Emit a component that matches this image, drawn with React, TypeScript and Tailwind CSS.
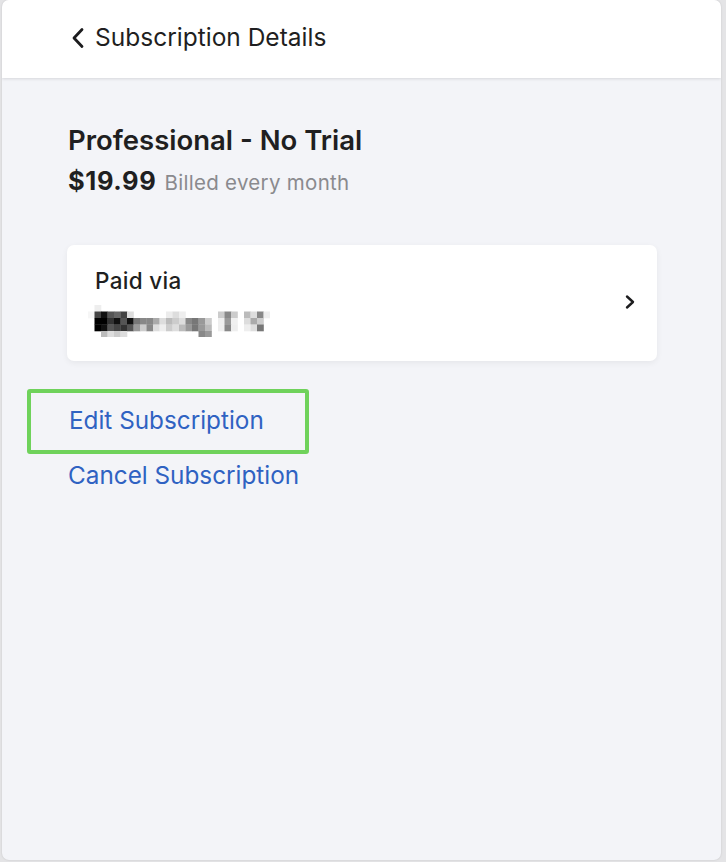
import React from "react";

const F = { fontFamily: "Inter, 'Noto Sans', sans-serif" };

const rows: string[][] = [
  ["", "#eeeeee", "", "", "", "", "", "", "", "", "", "", "", "", "", "", "", "", "", "", "", "", "", "", "", "", "", ""],
  ["#f6f6f6", "#444444", "#111111", "#555555", "#666666", "#444444", "#dddddd", "", "", "", "", "", "#ececec", "#dddddd", "#eeeeee", "", "", "", "", "", "#cccccc", "#888888", "#cccccc", "", "#bbbbbb", "#dddddd", "#888888", "#eeeeee"],
  ["", "#000000", "#000000", "#333333", "#111111", "#555555", "#111111", "#777777", "#888888", "#888888", "#aaaaaa", "#dddddd", "#bbbbbb", "#cccccc", "#dddddd", "#888888", "#777777", "#999999", "#cccccc", "", "#eeeeee", "#999999", "#f0f0f0", "", "#dddddd", "#aaaaaa", "#cccccc", ""],
  ["", "#000000", "#111111", "#555555", "#444444", "#333333", "#555555", "#999999", "#cccccc", "#888888", "#dddddd", "#eeeeee", "#cccccc", "#dddddd", "#bbbbbb", "#999999", "#777777", "#999999", "#bbbbbb", "", "#eeeeee", "#888888", "#eeeeee", "", "#eeeeee", "#dddddd", "#777777", ""],
  ["", "", "#bbbbbb", "#dddddd", "#cccccc", "#dddddd", "", "", "", "", "", "", "", "", "", "", "", "#888888", "#999999", "", "", "", "", "", "", "", "", ""],
];

function Mosaic() {
  const s = 6.5;
  return (
    <svg width={28 * s} height={5 * s} className="block">
      {rows.map((r, y) =>
        r.map((c, x) =>
          c ? <rect key={`${x}-${y}`} x={x * s} y={y * s} width={s + 0.3} height={s + 0.3} fill={c} /> : null
        )
      )}
    </svg>
  );
}

export default function App() {
  return (
    <div className="w-[726px] h-[862px] bg-[#e4e4e6] flex" style={F}>
      <div className="ml-[2px] w-[719px] h-[860px] rounded-[7px] bg-[#f3f4f8] overflow-hidden flex flex-col shadow-[0_0_2px_rgba(0,0,0,0.15)]">
        <div className="h-[78px] bg-white flex items-center pl-[67px] shadow-[0_1px_3px_rgba(0,0,0,0.12)] z-10 shrink-0">
          <svg width="18" height="22" viewBox="0 0 18 22" className="mr-[8px] mt-[-2px]">
            <path d="M13 2.5 L5 11 L13 19.5" fill="none" stroke="#1c1c1e" strokeWidth="2.8" strokeLinecap="round" strokeLinejoin="round" />
          </svg>
          <span className="text-[24.5px] text-[#1f1f21] mt-[-4px]">Subscription Details</span>
        </div>
        <div className="flex flex-col px-[63px] pt-[44px]">
          <div className="text-[27.5px] font-semibold text-[#1f1f21] leading-[36px] pl-[3px]">Professional - No Trial</div>
          <div className="flex items-baseline gap-[8px] pl-[3px] mt-[8px]">
            <span className="text-[25.5px] font-bold text-[#1f1f21] leading-[30px] tracking-[0.6px]">$19.99</span>
            <span className="text-[20.5px] text-[#8a8a8e] tracking-[0.3px]">Billed every month</span>
          </div>
          <div className="mt-[46px] ml-[2px] w-[590px] h-[116px] bg-white rounded-[7px] shadow-[0_2px_6px_rgba(0,0,0,0.06)] flex items-center justify-between pl-[28px] pr-[20px]">
            <div className="flex flex-col">
              <span className="text-[22.5px] font-medium text-[#1f1f21] leading-[28px] mt-[-2px] tracking-[0.3px]">Paid via</span>
              <div className="mt-[10px] ml-[-7px]"><Mosaic /></div>
            </div>
            <svg width="14" height="16" viewBox="0 0 14 16" className="mt-[-2px]">
              <path d="M4 2.5 L10 8 L4 13.5" fill="none" stroke="#1c1c1e" strokeWidth="2.4" strokeLinecap="round" strokeLinejoin="round" />
            </svg>
          </div>
          <div className="mt-[28px] ml-[-38px] w-[282px] h-[65px] border-[4px] border-[#6fd25b] rounded-[3px] flex items-center pl-[38px]">
            <span className="text-[24.3px] text-[#2f62c2] mt-[-2px]">Edit Subscription</span>
          </div>
          <div className="pl-[3px] mt-[3px] text-[24.3px] text-[#2f62c2]">Cancel Subscription</div>
        </div>
      </div>
    </div>
  );
}
